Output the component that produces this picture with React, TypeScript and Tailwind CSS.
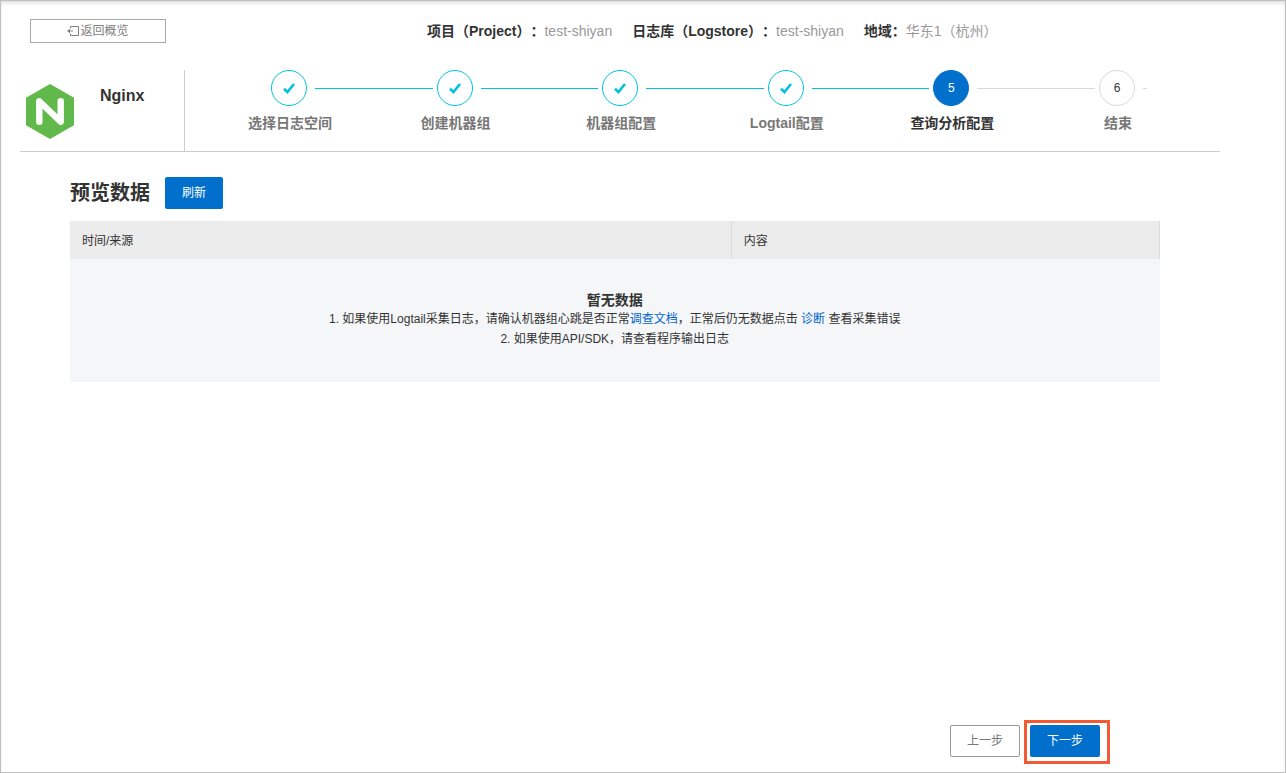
import clsx from 'clsx'

type StepStatus = 'done' | 'current' | 'todo'

const info = [
  { label: '项目（Project）：', value: 'test-shiyan' },
  { label: '日志库（Logstore）：', value: 'test-shiyan' },
  { label: '地域：', value: '华东1（杭州）' },
]

const steps: { title: string; status: StepStatus }[] = [
  { title: '选择日志空间', status: 'done' },
  { title: '创建机器组', status: 'done' },
  { title: '机器组配置', status: 'done' },
  { title: 'Logtail配置', status: 'done' },
  { title: '查询分析配置', status: 'current' },
  { title: '结束', status: 'todo' },
]

function BackIcon() {
  return (
    <svg width="12" height="12" viewBox="0 0 12 12" fill="none" stroke="#808080" aria-hidden="true">
      <path d="M3.5 3.5v-2h8v9h-8v-2" />
      <path d="M1 6h5" />
      <path d="M0 6l3-2.2v4.4z" fill="#808080" stroke="none" />
    </svg>
  )
}

function NginxLogo() {
  return (
    <svg width="48" height="55" viewBox="0 0 48 55" aria-hidden="true">
      <path d="M24 0L48 13.7v27.6L24 55 0 41.3V13.7z" fill="#62b94b" />
      <path
        d="M13.3 37.7V17.3L34.7 37.7V17.3"
        fill="none"
        stroke="#fff"
        strokeWidth="6.4"
        strokeLinecap="round"
        strokeLinejoin="round"
      />
    </svg>
  )
}

function CheckIcon() {
  return (
    <svg width="14" height="14" viewBox="0 0 14 14" fill="none" aria-hidden="true">
      <path d="M2 7.8l3.4 3.2L12 3" stroke="#00c1de" strokeWidth="2.6" />
    </svg>
  )
}

function TopBar() {
  return (
    <div className="flex h-[60px] items-center pl-[29px]">
      <button
        type="button"
        className="flex h-6 w-[136px] shrink-0 items-center justify-center gap-px border border-[#aaa] text-[#808080]"
      >
        <BackIcon />
        返回概览
      </button>
      <dl className="ml-[261px] flex gap-5 text-sm whitespace-nowrap [text-spacing-trim:space-all]">
        {info.map((item) => (
          <div key={item.label} className="flex">
            <dt className="font-bold">{item.label}</dt>
            <dd className="text-[#999]">{item.value}</dd>
          </div>
        ))}
      </dl>
    </div>
  )
}

function Step({ index, title, status }: { index: number; title: string; status: StepStatus }) {
  const last = index === steps.length
  return (
    <li className={last ? 'w-[124px] flex-none' : 'flex-1'}>
      <div className={clsx('flex items-center pl-[42px]', !last && '-mr-[42px]')}>
        <span
          className={clsx(
            'flex size-9 shrink-0 items-center justify-center rounded-full border',
            status === 'done' && 'border-[#00c1de]',
            status === 'current' && 'border-[#0070cc] bg-[#0070cc] text-white',
            status === 'todo' && 'border-[#d9d9d9]',
          )}
        >
          {status === 'done' ? <CheckIcon /> : index}
        </span>
        <span
          className={clsx(
            'mr-1 ml-2 h-px',
            last ? 'w-1' : 'flex-1',
            status === 'done' ? 'bg-[#00c1de]' : 'bg-[#d9d9d9]',
          )}
        />
      </div>
      <p
        className={clsx(
          'mt-2 w-[122px] text-center text-sm leading-[18px] font-bold',
          status !== 'current' && 'text-[#777]',
        )}
      >
        {title}
      </p>
    </li>
  )
}

function WizardHeader() {
  return (
    <header className="mr-[65px] ml-[19px] flex border-b border-[#ccc] pt-[9px]">
      <div className="flex h-[81px] w-[165px] shrink-0 gap-[26px] border-r border-[#ccc] pt-3.5 pl-1.5">
        <NginxLogo />
        <h1 className="text-base font-bold">Nginx</h1>
      </div>
      <ol className="flex flex-1 pr-[39px] pl-[44px]">
        {steps.map((step, i) => (
          <Step key={step.title} index={i + 1} title={step.title} status={step.status} />
        ))}
      </ol>
    </header>
  )
}

function Preview() {
  return (
    <main className="mt-[25px] mr-[125px] ml-[69px]">
      <div className="flex items-center gap-[15px]">
        <h2 className="text-xl leading-7 font-bold">预览数据</h2>
        <button type="button" className="h-8 rounded-xs bg-[#0070cc] px-[17px] text-white">
          刷新
        </button>
      </div>
      <table className="mt-3 w-full table-fixed">
        <thead className="bg-[#ebeceb] text-left">
          <tr>
            <th className="h-[38px] w-[60.7%] border-r border-[#d9dbda] px-3 pt-px font-normal">时间/来源</th>
            <th className="border-r border-[#d9dbda] px-3 pt-px font-normal">内容</th>
          </tr>
        </thead>
        <tbody className="bg-[#f5f6f8]">
          <tr>
            <td colSpan={2} className="pt-8 pb-[33px] text-center">
              <p className="text-sm leading-[18px] font-bold">暂无数据</p>
              <p>
                1. 如果使用Logtail采集日志，请确认机器组心跳是否正常
                <a href="#docs" className="text-[#0066cc]">
                  调查文档
                </a>
                ，正常后仍无数据点击{' '}
                <a href="#diagnose" className="text-[#0066cc]">
                  诊断
                </a>{' '}
                查看采集错误
              </p>
              <p>2. 如果使用API/SDK，请查看程序输出日志</p>
            </td>
          </tr>
        </tbody>
      </table>
    </main>
  )
}

function Footer() {
  return (
    <footer className="mt-auto mr-[185px] mb-[15px] flex justify-end gap-2.5">
      <button type="button" className="h-8 w-[70px] rounded-xs border border-[#999] text-[#777]">
        上一步
      </button>
      <div className="relative">
        <button type="button" className="h-8 w-[70px] rounded-xs bg-[#0070cc] text-white">
          下一步
        </button>
        <span className="pointer-events-none absolute -top-[5px] -right-[10px] -bottom-[7px] -left-[6px] border-[3px] border-[#f15a35]" />
      </div>
    </footer>
  )
}

export default function App() {
  return (
    <div
      lang="zh-CN"
      className="flex min-h-screen flex-col border border-[#c0c0c0] bg-white font-['Liberation_Sans','Noto_Sans_CJK_SC',sans-serif] text-xs leading-5 text-[#333] shadow-[inset_0_3px_4px_-1px_#ddd]"
    >
      <TopBar />
      <WizardHeader />
      <Preview />
      <Footer />
    </div>
  )
}
